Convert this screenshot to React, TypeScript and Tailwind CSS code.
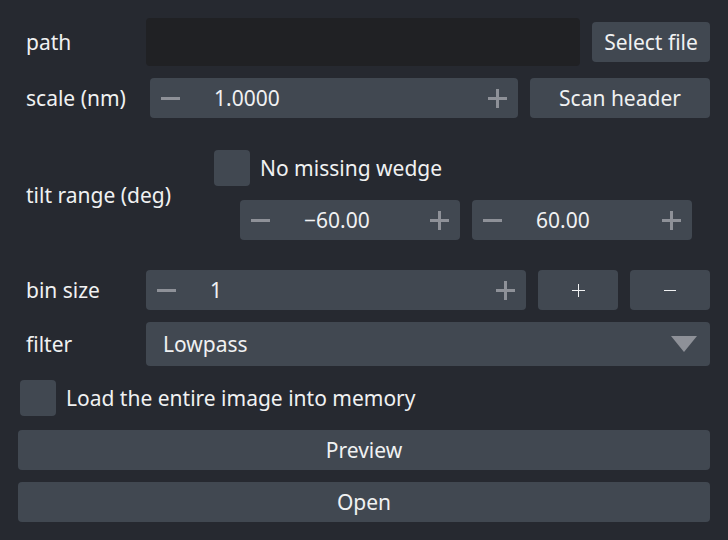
import React from 'react';

const font = { fontFamily: '"Noto Sans", "Noto Sans CJK JP", sans-serif' };

function Minus() {
  return <span className="block w-[19px] h-[3px] bg-[#8e9198]" />;
}

function Plus() {
  return (
    <svg width="19" height="19" viewBox="0 0 19 19">
      <rect x="0" y="8" width="19" height="3" fill="#8e9198" />
      <rect x="8" y="0" width="3" height="19" fill="#8e9198" />
    </svg>
  );
}

function SpinBox({ value, className }: { value: string; className: string }) {
  return (
    <div className={`flex items-center h-10 rounded-[4px] bg-[#414851] ${className}`}>
      <div className="w-[64px] pl-[11px] flex items-center">
        <Minus />
      </div>
      <span className="flex-1 text-[#f0f1f2]">{value}</span>
      <div className="pr-[11px] flex items-center">
        <Plus />
      </div>
    </div>
  );
}

function Checkbox() {
  return <span className="block w-9 h-9 rounded-[4px] bg-[#414851]" />;
}

export default function App() {
  return (
    <div
      className="w-[728px] h-[540px] bg-[#262930] text-[21px] text-[#f0f1f2] leading-none overflow-hidden"
      style={font}
    >
      {/* path */}
      <div className="flex items-center pt-[18px] pl-[26px]">
        <span className="w-[120px]">path</span>
        <div className="w-[434px] h-[48px] rounded-[4px] bg-[#202124]" />
        <button className="ml-3 w-[118px] h-10 rounded-[4px] bg-[#414851]">Select file</button>
      </div>

      {/* scale */}
      <div className="flex items-center mt-3 pl-[26px]">
        <span className="w-[124px]">scale (nm)</span>
        <SpinBox value="1.0000" className="w-[368px]" />
        <button className="ml-3 w-[180px] h-10 rounded-[4px] bg-[#414851]">Scan header</button>
      </div>

      {/* tilt range */}
      <div className="flex items-center mt-8 pl-[26px]">
        <span className="w-[188px]">tilt range (deg)</span>
        <div className="flex flex-col">
          <div className="flex items-center">
            <Checkbox />
            <span className="ml-[10px]">No missing wedge</span>
          </div>
          <div className="flex mt-[14px] ml-[26px] gap-3">
            <SpinBox value="−60.00" className="w-[220px]" />
            <SpinBox value="60.00" className="w-[220px]" />
          </div>
        </div>
      </div>

      {/* bin size */}
      <div className="flex items-center mt-[30px] pl-[26px]">
        <span className="w-[120px]">bin size</span>
        <SpinBox value="1" className="w-[380px]" />
        <button className="ml-3 w-20 h-10 rounded-[4px] bg-[#414851] flex items-center justify-center">
          <svg width="13" height="13" viewBox="0 0 13 13">
            <rect x="0" y="6" width="13" height="1" fill="#f0f1f2" />
            <rect x="6" y="0" width="1" height="13" fill="#f0f1f2" />
          </svg>
        </button>
        <button className="ml-3 w-20 h-10 rounded-[4px] bg-[#414851] flex items-center justify-center">
          <span className="block w-[12px] h-px bg-[#f0f1f2]" />
        </button>
      </div>

      {/* filter */}
      <div className="flex items-center mt-3 pl-[26px]">
        <span className="w-[120px]">filter</span>
        <div className="w-[564px] h-[44px] rounded-[4px] bg-[#414851] flex items-center pl-[17px] pr-[13px]">
          <span className="flex-1">Lowpass</span>
          <svg width="26" height="16" viewBox="0 0 26 16">
            <polygon points="0,0 26,0 13,16" fill="#8e9198" />
          </svg>
        </div>
      </div>

      {/* load into memory */}
      <div className="flex items-center mt-[14px] pl-5">
        <Checkbox />
        <span className="ml-[10px]">Load the entire image into memory</span>
      </div>

      <div className="px-[18px] mt-[14px] flex flex-col gap-3">
        <button className="h-10 w-full rounded-[4px] bg-[#414851]">Preview</button>
        <button className="h-10 w-full rounded-[4px] bg-[#414851]">Open</button>
      </div>
    </div>
  );
}
